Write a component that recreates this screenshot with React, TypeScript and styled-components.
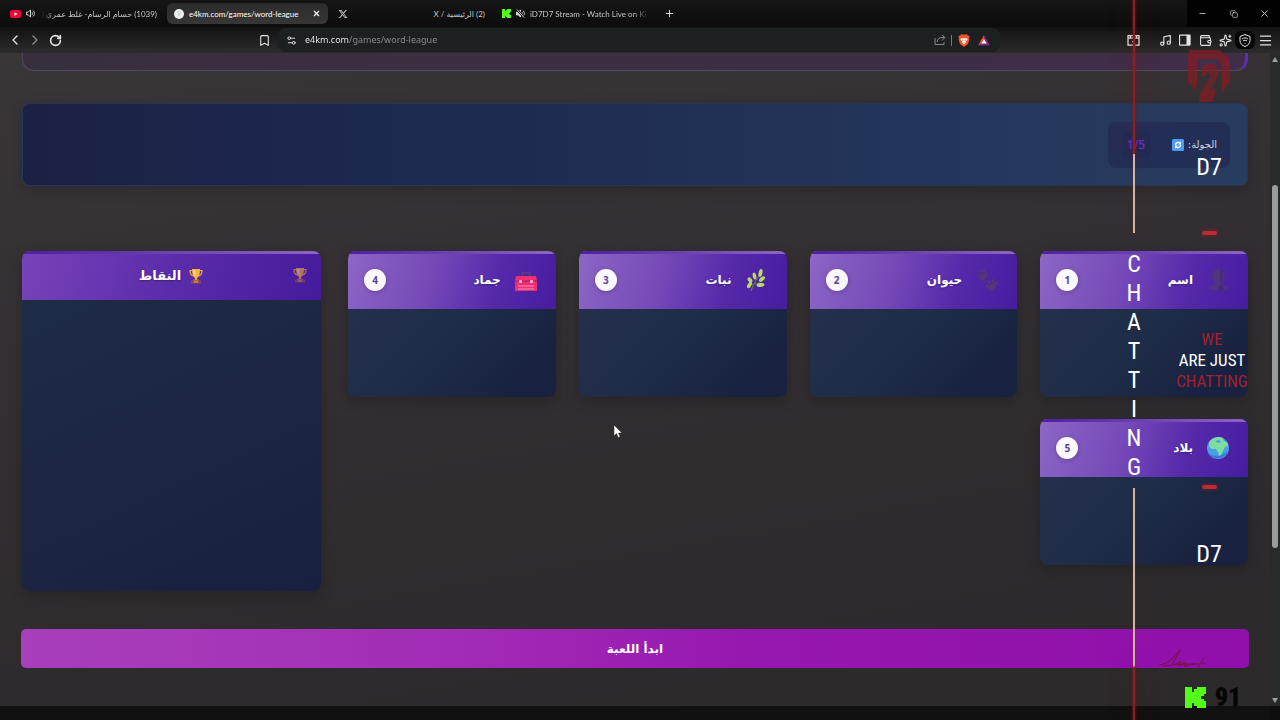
import React from "react";
import styled, { createGlobalStyle } from "styled-components";
import {
  Bookmark, ChevronLeft, ChevronRight, Copy, Menu, Minus, Music,
  Plus, RotateCw, Settings2, Sparkles, Wallet, X,
} from "lucide-react";
import { FaXTwitter } from "react-icons/fa6";

const Global = createGlobalStyle`
  * { box-sizing: border-box; }
  html, body { margin: 0; background: #0e0e0e; }
  body { font-family: "Noto Sans", "DejaVu Sans", sans-serif; color: #fff; }
  button, input { font: inherit; color: inherit; border: 0; background: none; padding: 0; margin: 0; }
`;

const narrow = `"Roboto Condensed", "Open Sans Condensed", "Noto Sans Condensed", "DejaVu Sans Condensed", sans-serif`;
const arabic = `"DejaVu Sans", "Noto Sans", sans-serif`;

const Screen = styled.div`
  position: relative;
  height: 100vh;
  min-height: 720px;
  display: flex;
  flex-direction: column;
  overflow: hidden;
`;

/* ---------- browser chrome ---------- */

const TabStrip = styled.div`
  display: flex;
  align-items: center;
  height: 27px;
  flex: none;
  padding-left: 3px;
  background: linear-gradient(#151515, #0c0c0c);
`;

const Tab = styled.button<{ $active?: boolean }>`
  display: flex;
  align-items: center;
  gap: 5px;
  width: 161px;
  height: 21px;
  margin-right: 3px;
  padding: 0 7px;
  border-radius: 6px;
  font-family: Lato, "DejaVu Sans", sans-serif;
  font-size: 8px;
  line-height: 14px;
  color: ${(p) => (p.$active ? "#ffffff" : "#c4c4c4")};
  background: ${(p) => (p.$active ? "linear-gradient(#2b2b2b, #373737)" : "transparent")};
  svg { flex: none; }
`;

const TabTitle = styled.span<{ $fade?: "left" | "right" }>`
  flex: 1;
  min-width: 0;
  white-space: nowrap;
  text-align: start;
  mask-image: ${(p) =>
    p.$fade === "left" ? "linear-gradient(to right, transparent, #000 16px)"
      : p.$fade === "right" ? "linear-gradient(to left, transparent, #000 16px)" : "none"};
`;

const IconButton = styled.button<{ $dim?: boolean; $dark?: boolean }>`
  display: grid;
  place-items: center;
  width: 20px;
  height: 18px;
  flex: none;
  border-radius: 6px;
  color: ${(p) => (p.$dim ? "#8a8a8a" : "#e4e4e4")};
  background: ${(p) => (p.$dark ? "#060606" : "none")};
`;

const WindowControls = styled.div`
  display: flex;
  height: 27px;
  margin-left: auto;
  background: #020202;
`;

const WindowButton = styled.button`
  display: grid;
  place-items: center;
  width: 31px;
  height: 27px;
  color: #dcdcdc;
`;

const Toolbar = styled.div`
  display: flex;
  align-items: center;
  height: 26px;
  flex: none;
  padding: 0 5px;
  background: linear-gradient(#121212, #2d2c2d);
`;

const Group = styled.div<{ $before?: number; $after?: number }>`
  display: flex;
  align-items: center;
  margin-left: ${(p) => p.$before ?? 0}px;
  margin-right: ${(p) => p.$after ?? 0}px;
`;

const AddressBar = styled.div`
  display: flex;
  align-items: center;
  flex: 1;
  min-width: 0;
  height: 24px;
  margin-left: 4px;
  padding: 0 3px;
  border-radius: 8px;
  background: #1d2021;
`;

const Address = styled.input`
  flex: 1;
  min-width: 0;
  margin-left: 4px;
  font-size: 9px;
  line-height: 18px;
  color: transparent;
  background: linear-gradient(to right, #f0f0f0 44px, #8c8f90 44px);
  background-clip: text;
  outline: none;
`;

const Divider = styled.span`
  width: 1px;
  height: 11px;
  background: #777;
`;

/* ---------- page ---------- */

const Viewport = styled.div`
  display: flex;
  flex: 1;
  min-height: 0;
`;

const Page = styled.main`
  display: flex;
  flex-direction: column;
  flex: 1;
  min-width: 0;
  padding: 0 22px 38px;
  background: linear-gradient(170deg, #393638 0%, #332e31 45%, #2d2b2d 75%, #2b292a 100%);
`;

const PanelEnd = styled.section`
  height: 18px;
  border: 1px solid #504766;
  border-top: 0;
  border-right: 3px solid #5b2fb5;
  border-radius: 0 0 12px 12px;
  background: linear-gradient(to right, #382f3c, #402e48);
`;

const RoundBar = styled.section`
  display: flex;
  align-items: center;
  height: 83px;
  margin-top: 32px;
  padding: 0 17px;
  border-radius: 8px;
  background: linear-gradient(to right, #1b2145 0%, #1e2b50 40%, #24365c 75%, #273d60 100%);
  border: 1px solid #25365b;
  box-shadow: 0 4px 14px rgba(0, 0, 0, 0.2);
`;

const RoundBox = styled.div`
  display: flex;
  align-items: center;
  gap: 4px;
  width: 122px;
  height: 46px;
  padding: 0 13px;
  border-radius: 8px;
  font-family: ${arabic};
  font-size: 10px;
  line-height: 16px;
  color: #d0d4e0;
  background: #232e57;
`;

const RoundCount = styled.strong`
  display: grid;
  place-items: center;
  width: 30px;
  height: 26px;
  margin-right: auto;
  border-radius: 6px;
  font-family: "Noto Sans", sans-serif;
  font-size: 12px;
  font-weight: 500;
  color: #6a30d8;
  background: #222b54;
`;

const Board = styled.div`
  display: flex;
  gap: 27px;
  margin-top: 65px;
`;

const Categories = styled.div`
  display: grid;
  grid-template-columns: repeat(4, minmax(0, 1fr));
  align-content: start;
  gap: 22px 23px;
  flex: 1;
`;

const Card = styled.section<{ $tall?: boolean }>`
  width: ${(p) => (p.$tall ? "299px" : "auto")};
  height: ${(p) => (p.$tall ? 340 : 146)}px;
  overflow: hidden;
  border-radius: 8px;
  background: ${(p) =>
    p.$tall ? "linear-gradient(155deg, #1f2d47 0%, #1c2542 60%, #18203f 100%)"
      : "linear-gradient(135deg, #28304f 0%, #1f2d48 50%, #182240 85%)"};
  box-shadow: 0 4px 14px rgba(0, 0, 0, 0.22);
`;

const CardHeader = styled.header<{ $center?: boolean }>`
  position: relative;
  display: flex;
  align-items: center;
  justify-content: ${(p) => (p.$center ? "center" : "flex-start")};
  gap: ${(p) => (p.$center ? 7 : 14)}px;
  height: ${(p) => (p.$center ? 49 : 58)}px;
  padding: 0 ${(p) => (p.$center ? 16 : 19)}px 0 16px;
  background: ${(p) =>
    p.$center ? "linear-gradient(105deg, #7743b8 0%, #5b2caa 50%, #451a9c 100%)"
      : "linear-gradient(105deg, #8d66c6 0%, #7549b8 40%, #5629ab 70%, #471c9f 100%)"};
  &::before {
    content: "";
    position: absolute;
    inset: 0 0 auto;
    height: 3px;
    background: linear-gradient(to right, #4b1fa0, #8d66c6);
  }
  svg { flex: none; }
`;

const CardTitle = styled.h2<{ $large?: boolean }>`
  margin: 0;
  font-family: ${arabic};
  font-size: ${(p) => (p.$large ? 13 : 12)}px;
  line-height: 20px;
  font-weight: 700;
  text-shadow: 0 1px 2px rgba(0, 0, 0, 0.3);
`;

const Badge = styled.span`
  display: grid;
  place-items: center;
  width: 22px;
  height: 22px;
  margin-right: auto;
  border-radius: 50%;
  font-size: 10px;
  line-height: 14px;
  font-weight: 700;
  color: #5a3f9c;
  background: #fbf8ff;
  box-shadow: 0 1px 4px rgba(0, 0, 0, 0.25);
`;

const CornerTrophy = styled.span`
  position: absolute;
  right: 13px;
  top: 16px;
  display: flex;
  opacity: 0.6;
`;

const StartButton = styled.button`
  height: 39px;
  flex: none;
  margin: 38px -1px 0;
  border-radius: 5px;
  font-family: ${arabic};
  font-size: 12px;
  line-height: 20px;
  font-weight: 700;
  background: linear-gradient(to right, #a83fbc 0%, #a32cb6 35%, #9617af 60%, #900fab 100%);
`;

const Scrollbar = styled.div`
  display: flex;
  flex-direction: column;
  align-items: center;
  width: 10px;
  padding: 4px 0 3px;
  background: #292a2a;
`;

const ScrollArrow = styled.span<{ $down?: boolean }>`
  border: 3px solid transparent;
  border-bottom: 5px solid #9d9d9d;
  border-top: 0;
  transform: ${(p) => (p.$down ? "rotate(180deg)" : "none")};
`;

const ScrollTrack = styled.div`
  display: flex;
  flex-direction: column;
  flex: 1;
`;

const ScrollThumb = styled.span`
  width: 6px;
  height: 57%;
  margin-top: 123px;
  border-radius: 3px;
  background: #9c9c9c;
`;

const BottomStrip = styled.footer`
  height: 14px;
  flex: none;
  margin-right: 10px;
  background: #101010;
`;

/* ---------- stream overlay ---------- */

const LineColumn = styled.div`
  position: absolute;
  top: 0;
  bottom: 0;
  right: 132px;
  width: 28px;
  display: flex;
  flex-direction: column;
  align-items: center;
  pointer-events: none;
`;

const Line = styled.span<{ $size?: number; $red?: boolean }>`
  width: 2px;
  flex: ${(p) => (p.$size ? `0 0 ${p.$size}px` : "1")};
  background: ${(p) => (p.$red ? "#8a1f22" : "#cdb5a0")};
  box-shadow: ${(p) => (p.$red ? "0 0 2px 1px rgba(130, 25, 30, 0.5), 0 0 24px 2px rgba(150, 20, 25, 0.2)" : "0 0 2px rgba(120, 40, 30, 0.8)")};
`;

const VerticalWord = styled.div`
  display: flex;
  flex-direction: column;
  align-items: center;
  padding: 17px 0 6px;
  font-family: ${narrow};
  font-size: 24px;
  line-height: 29px;
`;

const OverlayColumn = styled.div`
  position: absolute;
  top: 49px;
  right: 27px;
  width: 88px;
  display: flex;
  flex-direction: column;
  align-items: center;
  font-family: ${narrow};
  pointer-events: none;
`;

const Tag = styled.span<{ $gap: number }>`
  margin-top: ${(p) => p.$gap}px;
  font-size: 24px;
  line-height: 24px;
`;

const Dash = styled.span<{ $gap: number }>`
  width: 15px;
  height: 4px;
  margin-top: ${(p) => p.$gap}px;
  border-radius: 2px;
  background: #c3272f;
  box-shadow: 0 0 5px rgba(195, 39, 47, 0.4);
`;

const Slogan = styled.p`
  margin: 94px 0 0 6px;
  font-size: 17px;
  line-height: 21px;
  text-align: center;
  white-space: nowrap;
  span { display: block; }
`;

const Red = styled.span`
  color: #a3202d;
`;

const Signature = styled.svg`
  margin: 83px 52px 0 0;
`;

const Sponsor = styled.div`
  display: flex;
  align-items: center;
  gap: 9px;
  margin: 16px 0 0 8px;
  font-family: "Roboto Condensed", Roboto, sans-serif;
  font-size: 26px;
  line-height: 24px;
  font-weight: 900;
  color: #050505;
`;

const Pointer = styled.svg`
  position: absolute;
  left: 48%;
  top: 425px;
`;

/* ---------- drawings ---------- */

const KickLogo = ({ size }: { size: number }) => (
  <svg width={size} height={size} viewBox="0 0 9 9" fill="#53fc18" shapeRendering="crispEdges" aria-hidden>
    <path d="M0 0h3v2h1v-1h1v-1h4v3h-1v1h-1v1h1v1h1v3h-4v-1h-1v-1h-1v2h-3z" />
  </svg>
);

const YouTubeLogo = () => (
  <svg width="11" height="8" viewBox="0 0 22 16" aria-hidden>
    <rect width="22" height="16" rx="4" fill="#f0063a" />
    <path d="M9 4.5v7l6-3.500z" fill="#fff" />
  </svg>
);

const Speaker = ({ muted }: { muted?: boolean }) => (
  <svg width="9" height="9" viewBox="0 0 20 20" fill="none" stroke="#e6e6e6" strokeWidth="2" aria-hidden>
    <path d="M1 7h4l5-5v16l-5-5H1z" fill={muted ? "#e6e6e6" : "none"} />
    <path d="M13 7c2 2 2 4 0 6M15 3c5 4 5 10 0 14" />
    {muted && <path d="M2 1l16 18" stroke="#0c0c0c" strokeWidth="5" />}
    {muted && <path d="M2 1l16 18" />}
  </svg>
);

const SiteIcon = () => (
  <svg width="10" height="10" viewBox="0 0 20 20" aria-hidden>
    <circle cx="10" cy="10" r="10" fill="#eee" />
    <path d="M6 6h3M11 6l3 1M8 10h5M10 10v5" stroke="#bbb" strokeWidth="1.500" />
  </svg>
);

const ShareIcon = () => (
  <svg width="12" height="12" viewBox="0 0 24 24" fill="none" stroke="currentColor" strokeWidth="2" aria-hidden>
    <path d="M2 8v13h18v-5" />
    <path d="M6 16c1-6 5-9 10-9h5M16 2l6 5-6 6" />
  </svg>
);

const BraveLogo = () => (
  <svg width="12" height="13" viewBox="0 0 24 26" aria-hidden>
    <path d="M6 1h12l2 2 3 1-1 4 1 2-3 10-8 6-8-6L1 10l1-2-1-4 3-1z" fill="#f1562b" />
    <path d="M6 8l4 1 2-1 2 1 4-1 1 3-4 5 1 1-4 4-4-4 1-1-4-5z" fill="#fff" />
    <path d="M8 11l3 1-1 3zM16 11l-3 1 1 3zM10 17h4l-2 2z" fill="#f1562b" />
  </svg>
);

const BatLogo = () => (
  <svg width="12" height="11" viewBox="0 0 24 22" aria-hidden>
    <path d="M12 0L0 21l12-6z" fill="#ff4724" />
    <path d="M12 0l12 21-12-6z" fill="#9e1f63" />
    <path d="M0 21h24l-12-7z" fill="#662d91" />
    <path d="M12 8l5.500 9h-11z" fill="#fff" />
  </svg>
);

const BoxIcon = () => (
  <svg width="13" height="12" viewBox="0 0 26 24" fill="none" stroke="currentColor" strokeWidth="2.500" aria-hidden>
    <path d="M2 3h22v19H2zM2 8h22M7 3v5M19 3v5" />
    <path d="M10 15h6M13 12v6" />
  </svg>
);

const SidebarIcon = () => (
  <svg width="12" height="12" viewBox="0 0 24 24" aria-hidden>
    <rect x="1" y="2" width="21" height="20" rx="1" fill="none" stroke="currentColor" strokeWidth="2.500" />
    <path d="M15 2h7v20h-7z" fill="currentColor" />
  </svg>
);

const VpnIcon = () => (
  <svg width="12" height="13" viewBox="0 0 24 26" fill="none" stroke="currentColor" strokeWidth="2" aria-hidden>
    <path d="M12 1l10 4v8c0 6-4 10-10 12C6 23 2 19 2 13V5z" />
    <path d="M6 10c4-3 8-3 12 0M8 14c3-2 5-2 8 0M11 18l1 1 1-1" />
  </svg>
);

const Trophy = ({ size = 16 }: { size?: number }) => (
  <svg width={size} height={size} viewBox="0 0 32 32" aria-hidden>
    <path d="M9 5H4c0 7 2 10 7 11M23 5h5c0 7-2 10-7 11" fill="none" stroke="#e9a23b" strokeWidth="2.500" />
    <path d="M8 2h16c0 10-2 16-6 18v4h-4v-4C10 18 8 12 8 2z" fill="#f6b53c" />
    <path d="M10 4h4c0 7 1 10 2 13-4-2-6-7-6-13z" fill="#ffe08a" />
    <path d="M11 23h10l2 3H9z" fill="#d67b3c" />
    <rect x="6" y="25" width="20" height="6" rx="1" fill="#8d4a45" />
    <rect x="12" y="27" width="8" height="2" fill="#f0b860" />
  </svg>
);

const Person = () => (
  <svg width="22" height="24" viewBox="0 0 22 24" aria-hidden>
    <path d="M11 1c4 0 6 3 6 7 0 3-1 5-3 6v3c4 1 7 2 7 5H2c0-3 2-4 6-5v-3C6 13 5 11 5 8c0-4 2-7 6-7z" fill="#50357c" />
    <path d="M13 1c4 2 4 10 0 13v3l6 5h-8l2-5z" fill="#452d6e" />
  </svg>
);

const Paws = () => (
  <svg width="22" height="24" viewBox="0 0 22 24" fill="#553873" aria-hidden>
    <ellipse cx="7" cy="9" rx="4" ry="3" transform="rotate(-35 7 9)" />
    <ellipse cx="2" cy="8" rx="1.500" ry="2" />
    <ellipse cx="4" cy="4" rx="1.500" ry="2" />
    <ellipse cx="8" cy="3" rx="1.500" ry="2" />
    <ellipse cx="10" cy="6" rx="1.500" ry="2" />
    <ellipse cx="16" cy="19" rx="4" ry="3" transform="rotate(-35 16 19)" />
    <ellipse cx="11" cy="18" rx="1.500" ry="2" />
    <ellipse cx="13" cy="14" rx="1.500" ry="2" />
    <ellipse cx="17" cy="13" rx="1.500" ry="2" />
    <ellipse cx="20" cy="15" rx="1.500" ry="2" />
  </svg>
);

const Herb = () => (
  <svg width="22" height="24" viewBox="0 0 22 24" aria-hidden>
    <path d="M5 23C7 16 12 10 15 4M8 16c4 0 6-1 9-4M7 17c-2-2-2-4-4-6" stroke="#5c8b42" fill="none" />
    <g fill="#b7d968">
      <ellipse cx="14.500" cy="5" rx="1.900" ry="4" transform="rotate(14 14.500 5)" />
      <ellipse cx="8.500" cy="8" rx="1.800" ry="3.500" transform="rotate(-12 8.500 8)" />
      <ellipse cx="16" cy="11" rx="1.900" ry="3.500" transform="rotate(52 16 11)" />
      <ellipse cx="14.500" cy="17" rx="1.900" ry="4" transform="rotate(82 14.500 17)" />
      <ellipse cx="4" cy="12" rx="1.900" ry="3" transform="rotate(-40 4 12)" />
      <ellipse cx="3.500" cy="17" rx="1.900" ry="3.500" transform="rotate(32 3.500 17)" />
    </g>
  </svg>
);

const Toolbox = () => (
  <svg width="22" height="24" viewBox="0 0 22 24" aria-hidden>
    <path d="M7 8V5h8v3" fill="none" stroke="#5c3f78" strokeWidth="1.500" />
    <path d="M1 8h20l1 5v9a1 1 0 0 1-1 1H1a1 1 0 0 1-1-1v-9z" fill="#ee2f74" />
    <path d="M0 13h22" stroke="#b01d5c" />
    <rect x="4" y="12" width="3" height="3" rx="1" fill="#ffb3d3" />
    <rect x="15" y="12" width="3" height="3" rx="1" fill="#ffb3d3" />
    <path d="M3 18h16M3 21h16" stroke="#ff8fb8" />
  </svg>
);

const Globe = () => (
  <svg width="22" height="24" viewBox="0 0 22 24" aria-hidden>
    <circle cx="11" cy="12" r="11" fill="#489fe6" />
    <path d="M3 19c5 5 14 5 18-4-4 4-11 6-18 4z" fill="#3c78d4" />
    <path d="M3 5c4-4 9-5 13-3l1 3 3 1 1 4-3 1-2 4-2 4-2 1-1-4-2-3-4 0-3-2 0-4z" fill="#7fdba0" />
    <path d="M8 5l4-1 2 2-3 1zM1 10l3 3 1 4-2 1c-2-3-2-5-2-8z" fill="#489fe6" />
  </svg>
);

const Refresh = () => (
  <svg width="12" height="12" viewBox="0 0 24 24" aria-hidden>
    <rect width="24" height="24" rx="3" fill="#4d9cf0" />
    <path d="M7 12a5 5 0 0 1 9-3M17 12a5 5 0 0 1-9 3" fill="none" stroke="#fff" strokeWidth="2.500" />
    <path d="M18 5v6h-6zM6 19v-6h6z" fill="#fff" />
  </svg>
);

const StreamLogo = () => (
  <svg width="44" height="54" viewBox="0 0 44 54" opacity="0.72" aria-hidden>
    <path d="M3 1h29l11 9v23l-8 10V17l-5-7H10v24l-1 7-8-7V4z" fill="#861b22" />
    <path d="M15 18l4-3h8l4 5v7l-8 13h6l-3 13H12l1-8 11-18-2-4-4 4h-4z" fill="#861b22" />
    <path d="M28 23l-6 14 5-4-2 9" stroke="#513033" fill="none" />
  </svg>
);

const cards = [
  { n: 1, title: "اسم", icon: <Person /> },
  { n: 2, title: "حيوان", icon: <Paws /> },
  { n: 3, title: "نبات", icon: <Herb /> },
  { n: 4, title: "جماد", icon: <Toolbox /> },
  { n: 5, title: "بلاد", icon: <Globe /> },
];

export default function App() {
  return (
    <Screen>
      <Global />
      <TabStrip role="tablist">
        <Tab role="tab">
          <YouTubeLogo />
          <Speaker />
          <TabTitle dir="rtl" $fade="left">(1039) حسام الرسام- غلط عمري (م</TabTitle>
        </Tab>
        <Tab role="tab" $active aria-selected>
          <SiteIcon />
          <TabTitle>e4km.com/games/word-league</TabTitle>
          <X size={9} strokeWidth={3} />
        </Tab>
        <Tab role="tab">
          <FaXTwitter size={10} />
          <TabTitle dir="rtl">(2) الرئيسية / X</TabTitle>
        </Tab>
        <Tab role="tab">
          <KickLogo size={9} />
          <Speaker muted />
          <TabTitle $fade="right">iD7D7 Stream - Watch Live on Ki</TabTitle>
        </Tab>
        <IconButton aria-label="New tab"><Plus size={11} /></IconButton>
        <WindowControls>
          <WindowButton aria-label="Minimize"><Minus size={9} /></WindowButton>
          <WindowButton aria-label="Restore"><Copy size={8} /></WindowButton>
          <WindowButton aria-label="Close"><X size={11} /></WindowButton>
        </WindowControls>
      </TabStrip>

      <Toolbar>
        <Group $after={189}>
          <IconButton aria-label="Back"><ChevronLeft size={16} /></IconButton>
          <IconButton aria-label="Forward" $dim><ChevronRight size={16} /></IconButton>
          <IconButton aria-label="Reload"><RotateCw size={13} strokeWidth={3} /></IconButton>
        </Group>
        <IconButton aria-label="Bookmark"><Bookmark size={13} /></IconButton>
        <AddressBar>
          <IconButton aria-label="Site settings"><Settings2 size={11} /></IconButton>
          <Address aria-label="Address" defaultValue="e4km.com/games/word-league" />
          <Group $after={1}>
            <IconButton aria-label="Share" $dim><ShareIcon /></IconButton>
          </Group>
          <Divider />
          <Group $before={2} $after={3}>
            <IconButton aria-label="Brave Shields"><BraveLogo /></IconButton>
            <IconButton aria-label="Rewards"><BatLogo /></IconButton>
          </Group>
        </AddressBar>
        <Group $before={123} $after={12}>
          <IconButton aria-label="Archive"><BoxIcon /></IconButton>
        </Group>
        <Group>
          <IconButton aria-label="Media"><Music size={13} /></IconButton>
          <IconButton aria-label="Sidebar"><SidebarIcon /></IconButton>
          <IconButton aria-label="Wallet"><Wallet size={13} /></IconButton>
          <IconButton aria-label="Assistant"><Sparkles size={13} /></IconButton>
          <IconButton aria-label="VPN" $dark><VpnIcon /></IconButton>
          <IconButton aria-label="Menu"><Menu size={15} /></IconButton>
        </Group>
      </Toolbar>

      <Viewport>
        <Page dir="rtl" lang="ar">
          <PanelEnd />
          <RoundBar>
            <RoundBox>
              <span>الجولة:</span>
              <Refresh />
              <RoundCount dir="ltr">1/5</RoundCount>
            </RoundBox>
          </RoundBar>
          <Board>
            <Categories>
              {cards.map((c) => (
                <Card key={c.n}>
                  <CardHeader>
                    {c.icon}
                    <CardTitle>{c.title}</CardTitle>
                    <Badge>{c.n}</Badge>
                  </CardHeader>
                </Card>
              ))}
            </Categories>
            <Card $tall>
              <CardHeader $center>
                <Trophy />
                <CardTitle $large>النقاط</CardTitle>
                <CornerTrophy><Trophy /></CornerTrophy>
              </CardHeader>
            </Card>
          </Board>
          <StartButton>ابدأ اللعبة</StartButton>
        </Page>
        <Scrollbar>
          <ScrollArrow />
          <ScrollTrack><ScrollThumb /></ScrollTrack>
          <ScrollArrow $down />
        </Scrollbar>
      </Viewport>
      <BottomStrip />

      <LineColumn>
        <Line $red $size={154} />
        <Line $size={79} />
        <VerticalWord>
          {"CHATTING".split("").map((ch, i) => <span key={i}>{ch}</span>)}
        </VerticalWord>
        <Line $size={179} />
        <Line $red />
      </LineColumn>
      <OverlayColumn>
        <StreamLogo />
        <Tag $gap={52}>D7</Tag>
        <Dash $gap={52} />
        <Slogan>
          <Red>WE</Red>
          <span>ARE JUST</span>
          <Red>CHATTING</Red>
        </Slogan>
        <Dash $gap={93} />
        <Tag $gap={53}>D7</Tag>
        <Signature width="50" height="20" viewBox="0 0 50 20" fill="none" stroke="#751536" aria-hidden>
          <path d="M1 16C10 15 17 8 22 1c-4 8-8 14-7 15 4-1 7-4 8-3l-2 4c3-1 5-4 6-3l-1 3c4 0 8-2 12-2M5 17c12-2 24-2 36-2M46 9l-6 10M44 14l4 0" />
        </Signature>
        <Sponsor>
          <KickLogo size={21} />
          <span>91</span>
        </Sponsor>
      </OverlayColumn>
      <Pointer width="8" height="13" viewBox="0 0 8 13" aria-hidden>
        <path d="M0 0v11l2.500-2.500 1.700 4 2-1-1.700-3.500H8z" fill="#fff" stroke="#222" strokeWidth="0.500" />
      </Pointer>
    </Screen>
  );
}
